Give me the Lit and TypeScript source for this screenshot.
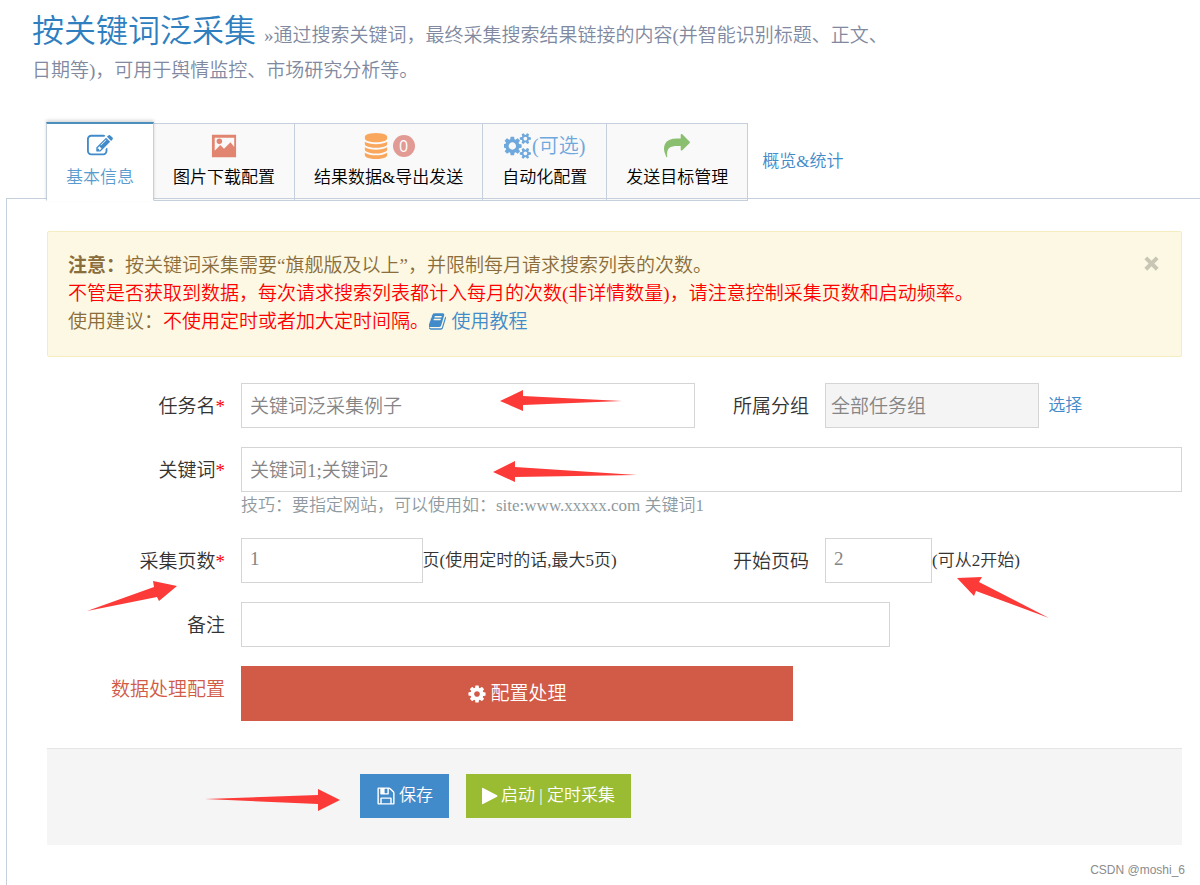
import { LitElement, html, css, svg } from "lit";
import { customElement, property, state } from "lit/decorators.js";
import { classMap } from "lit/directives/class-map.js";

interface Glyph {
  box: string;
  d: string;
}

const SQUARE = "0 0 1792 1792";

const GLYPHS: Record<string, Glyph> = {
  edit: {
    box: SQUARE,
    d: "M888 1184l116-116-152-152-116 116v56h96v96h56zm440-720q-16-16-33 1l-350 350q-17 17-1 33t33-1l350-350q17-17 1-33zm80 594v190q0 119-84.500 203.500t-203.500 84.500h-832q-119 0-203.500-84.500t-84.500-203.500v-832q0-119 84.500-203.500t203.500-84.500h832q63 0 117 25 15 7 18 23 3 17-9 29l-49 49q-14 14-32 8-23-6-45-6h-832q-66 0-113 47t-47 113v832q0 66 47 113t113 47h832q66 0 113-47t47-113v-126q0-13 9-22l64-64q15-15 35-7t20 29zm-96-738l288 288-672 672h-288v-288zm444 132l-92 92-288-288 92-92q28-28 68-28t68 28l152 152q28 28 28 68t-28 68z",
  },
  picture: {
    box: "0 0 28 28",
    d: "M1 2h26v24H1zM4 5v14l6-6 4 4 7-7 4 5V5zM9 6a3 3 0 1 1 0 6 3 3 0 0 1 0-6z",
  },
  database: {
    box: SQUARE,
    d: "M896 768q237 0 443-43t325-127v170q0 69-103 128t-280 93.500-385 34.500-385-34.500-280-93.500-103-128v-170q119 84 325 127t443 43zm0 768q237 0 443-43t325-127v170q0 69-103 128t-280 93.500-385 34.500-385-34.500-280-93.500-103-128v-170q119 84 325 127t443 43zm0-384q237 0 443-43t325-127v170q0 69-103 128t-280 93.500-385 34.500-385-34.500-280-93.500-103-128v-170q119 84 325 127t443 43zm0-1152q208 0 385 34.500t280 93.500 103 128v128q0 69-103 128t-280 93.500-385 34.500-385-34.500-280-93.500-103-128v-128q0-69 103-128t280-93.500 385-34.500z",
  },
  cogs: {
    box: "0 0 1920 1792",
    d: "M832 896q0-106-75-181t-181-75-181 75-75 181 75 181 181 75 181-75 75-181zm768 512q0-52-38-90t-90-38-90 38-38 90q0 53 37.500 90.500t90.500 37.500 90.500-37.500 37.500-90.500zm0-1024q0-52-38-90t-90-38-90 38-38 90q0 53 37.500 90.500t90.500 37.500 90.500-37.500 37.500-90.500zm-384 421v185q0 10-7 19.500t-16 10.500l-155 24q-11 35-32 76 34 48 90 115 7 11 7 20 0 12-7 19-23 30-82.500 89.500t-78.500 59.500q-11 0-21-7l-115-90q-37 19-77 31-11 108-23 155-7 24-30 24h-186q-11 0-20-7.500t-10-17.500l-23-153q-34-10-75-31l-118 89q-7 7-20 7-11 0-21-8-144-133-144-160 0-9 7-19 10-14 41-53t47-61q-23-44-35-82l-152-24q-10-1-17-9.500t-7-19.500v-185q0-10 7-19.500t16-10.500l155-24q11-35 32-76-34-48-90-115-7-11-7-20 0-12 7-20 22-30 82-89t79-59q11 0 21 7l115 90q34-18 77-32 11-108 23-154 7-24 30-24h186q11 0 20 7.500t10 17.500l23 153q34 10 75 31l118-89q8-7 20-7 11 0 21 8 144 133 144 160 0 8-7 19-12 16-42 54t-45 60q23 48 34 82l152 23q10 2 17 10.500t7 19.500zm640 533v140q0 16-149 31-12 27-30 52 51 113 51 138 0 4-4 7-122 71-124 71-8 0-46-47t-52-68q-20 2-30 2t-30-2q-14 21-52 68t-46 47q-2 0-124-71-4-3-4-7 0-25 51-138-18-25-30-52-149-15-149-31v-140q0-16 149-31 13-29 30-52-51-113-51-138 0-4 4-7 4-2 35-20t59-34 30-16q8 0 46 46.500t52 67.500q20-2 30-2t30 2q51-71 92-112l6-2q4 0 124 70 4 3 4 7 0 25-51 138 17 23 30 52 149 15 149 31zm0-1024v140q0 16-149 31-12 27-30 52 51 113 51 138 0 4-4 7-122 71-124 71-8 0-46-47t-52-68q-20 2-30 2t-30-2q-14 21-52 68t-46 47q-2 0-124-71-4-3-4-7 0-25 51-138-18-25-30-52-149-15-149-31v-140q0-16 149-31 13-29 30-52-51-113-51-138 0-4 4-7 4-2 35-20t59-34 30-16q8 0 46 46.500t52 67.500q20-2 30-2t30 2q51-71 92-112l6-2q4 0 124 70 4 3 4 7 0 25-51 138 17 23 30 52 149 15 149 31z",
  },
  share: {
    box: SQUARE,
    d: "M1792 640q0 26-19 45l-512 512q-19 19-45 19t-45-19-19-45v-256h-224q-98 0-175.500 6t-154 21.500-133 42.500-105.500 69.500-80 101-48.500 138.500-17.500 181q0 55 5 123 0 6 2.500 23.500t2.500 26.500q0 15-8.500 25t-23.500 10q-16 0-28-17-7-9-13-22t-13.500-30-10.500-24q-127-285-127-451 0-199 53-333 162-403 875-403h224v-256q0-26 19-45t45-19 45 19l512 512q19 19 19 45z",
  },
  book: {
    box: "64 0 1664 1792",
    d: "M1639 478q40 57 18 129l-275 906q-19 64-76.500 107.500t-122.500 43.500h-923q-77 0-148.500-53.500t-99.500-131.500q-24-67-2-127 0-4 3-27t4-37q1-8-3-21.500t-3-19.500q2-11 8-21t16.500-23.500 16.500-23.500q23-38 45-91.500t30-91.500q3-10 .5-30t-.5-28q3-11 17-28t17-23q21-36 42-92t25-90q1-9-2.500-32t.5-28q4-13 22-30.500t22-22.500q19-26 42.500-84.500t27.500-96.500q1-8-3-25.500t-2-26.500q2-8 9-18t18-23 17-21q8-12 16.500-30.500t15-35 16-36 19.500-32 26.500-23.500 36-11.500 47.500 5.500l-1 3q38-9 51-9h761q74 0 114 56t18 130l-274 906q-36 119-71.500 153.500t-128.500 34.500h-869q-27 0-38 15-11 16-1 43 24 70 144 70h923q29 0 56-15.500t35-41.500l300-987q7-22 5-57 38 15 59 43zm-1064 2q-4 13 2 22.500t20 9.500h608q13 0 25.500-9.500t16.500-22.500l21-64q4-13-2-22.500t-20-9.500h-608q-13 0-25.500 9.500t-16.500 22.500zm-83 256q-4 13 2 22.500t20 9.500h608q13 0 25.500-9.500t16.500-22.500l21-64q4-13-2-22.500t-20-9.500h-608q-13 0-25.500 9.500t-16.500 22.500z",
  },
  cog: {
    box: SQUARE,
    d: "M1152 896q0-106-75-181t-181-75-181 75-75 181 75 181 181 75 181-75 75-181zm512-109v222q0 12-8 23t-20 13l-185 28q-19 54-39 91 35 50 107 138 10 12 10 25t-9 23q-27 37-99 108t-94 71q-12 0-26-9l-138-108q-44 23-91 38-16 136-29 186-7 28-36 28h-222q-14 0-24.500-8.500t-11.500-21.500l-28-184q-49-16-90-37l-141 107q-10 9-25 9-14 0-25-11-126-114-165-168-7-10-7-23 0-12 8-23 15-21 51-66.500t54-70.500q-27-50-41-99l-183-27q-13-2-21-12.500t-8-23.500v-222q0-12 8-23t19-13l186-28q14-46 39-92-40-57-107-138-10-12-10-24 0-10 9-23 26-36 98.500-107.500t94.500-71.500q13 0 26 10l138 107q44-23 91-38 16-136 29-186 7-28 36-28h222q14 0 24.500 8.500t11.500 21.500l28 184q49 16 90 37l142-107q9-9 24-9 13 0 25 10 129 119 165 170 7 8 7 22 0 12-8 23-15 21-51 66.500t-54 70.500q26 50 41 98l183 28q13 2 21 12.500t8 23.500z",
  },
  save: {
    box: SQUARE,
    d: "M512 1536h768v-384h-768v384zm896 0h128v-896q0-14-10-38.500t-20-34.500l-281-281q-10-10-34-20t-39-10v416q0 40-28 68t-68 28h-576q-40 0-68-28t-28-68v-416h-128v1280h128v-416q0-40 28-68t68-28h832q40 0 68 28t28 68v416zm-384-928v-320q0-13-9.500-22.500t-22.500-9.500h-192q-13 0-22.500 9.500t-9.500 22.500v320q0 13 9.500 22.500t22.500 9.500h192q13 0 22.500-9.500t9.500-22.500zm640 32v928q0 40-28 68t-68 28h-1344q-40 0-68-28t-28-68v-1344q0-40 28-68t68-28h928q40 0 88 20t76 48l280 280q28 28 48 76t20 88z",
  },
  play: {
    box: "3 0 16 20",
    d: "M3 2.500q0-1 1-.6L18 9.300q1 .7 0 1.400L4 18.100q-1 .4-1-.6z",
  },
  times: {
    box: "0 0 20 20",
    d: "M5.500 2.500L10 7l4.500-4.500 3 3L13 10l4.500 4.500-3 3L10 13l-4.500 4.500-3-3L7 10 2.500 5.500z",
  },
};

@customElement("ui-icon")
class UiIcon extends LitElement {
  @property() name = "cog";

  static styles = css`
    :host {
      display: inline-flex;
    }
    .glyph {
      height: 100%;
      fill: currentColor;
      fill-rule: evenodd;
    }
  `;

  render() {
    const g = GLYPHS[this.name];
    return html`<svg class="glyph" viewBox=${g.box} aria-hidden="true">
      ${svg`<path d=${g.d}></path>`}
    </svg>`;
  }
}

const TABS = [
  { id: "basic", label: "基本信息", icon: "edit" },
  { id: "picture", label: "图片下载配置", icon: "picture" },
  { id: "database", label: "结果数据&导出发送", icon: "database", count: "0" },
  { id: "cogs", label: "自动化配置", icon: "cogs", note: "(可选)" },
  { id: "share", label: "发送目标管理", icon: "share" },
];

const ARROWS = [
  "500,401 523,390 523,396 622,401 523,405 523,411",
  "493,472 515,461 515,467 637,475 515,477 515,482",
  "177,586 153,581 154,587 87,611 157,597 159,601",
  "957,578 982,577 979,582 1049,618 976,591 974,596",
  "340,800 318,789 318,795 205,799 318,804 318,811",
];

@customElement("app-root")
class AppRoot extends LitElement {
  @state() private active = "basic";
  @state() private noticeOpen = true;

  static styles = css`
    :host {
      display: block;
      position: relative;
      box-sizing: border-box;
      min-height: 100vh;
      background: #fff;
      color: #333;
      font: 350 19px/28px "Liberation Serif", "Noto Sans CJK SC", serif;
    }
    * {
      box-sizing: border-box;
    }
    a {
      color: #428bca;
      text-decoration: none;
    }
    button,
    input {
      font: inherit;
    }
    .page {
      display: flex;
      flex-direction: column;
      min-height: 100vh;
    }
    .heading {
      max-width: 892px;
      margin: 0;
      padding: 14px 0 38px 32px;
      color: #2f7fc0;
      font-size: 32px;
      font-weight: 350;
      line-height: 35px;
    }
    .subtitle {
      color: #8089a0;
      font-size: 19px;
      line-height: 24px;
    }
    .tabs {
      display: flex;
      align-items: flex-end;
      margin-bottom: -3px;
      padding-left: 46px;
    }
    .tab {
      display: flex;
      flex-direction: column;
      align-items: center;
      gap: 6px;
      margin: 0 0 0 -1px;
      padding: 8px 19px 10px;
      border: 1px solid #c5d0dc;
      border-radius: 0;
      background: #f9f9f9;
      color: #000;
      font-size: 17px;
      line-height: 24px;
      cursor: pointer;
    }
    .tab.active {
      position: relative;
      z-index: 1;
      margin-left: 0;
      border-top: 2px solid #4c8fbd;
      border-bottom-color: #fff;
      background: #fff;
      box-shadow: 0 -2px 3px rgba(0, 0, 0, 0.15);
      color: #5a9bcf;
    }
    .tab-icon {
      display: flex;
      align-items: center;
      height: 28px;
      font-size: 20px;
    }
    .tab-icon ui-icon {
      height: 26px;
    }
    .basic {
      color: #428bca;
    }
    .picture {
      color: #e28570;
    }
    .database {
      gap: 4px;
      color: #f8a75c;
    }
    .cogs {
      color: #6fa8dc;
    }
    .share {
      color: #8abf70;
    }
    .count {
      width: 22px;
      height: 22px;
      border-radius: 11px;
      background: #e29a94;
      color: #fff;
      font: 16px/22px "Open Sans", sans-serif;
      text-align: center;
    }
    .overview {
      align-self: center;
      padding-left: 14px;
      font-size: 17px;
    }
    .pane {
      flex: 1;
      margin-left: 6px;
      padding: 32px 18px 40px 40px;
      border-top: 1px solid #c5d0dc;
      border-left: 1px solid #c5d0dc;
    }
    .notice {
      display: flex;
      justify-content: space-between;
      align-items: flex-start;
      margin-bottom: 26px;
      padding: 20px;
      border: 1px solid #f5edc0;
      border-radius: 2px;
      background: #fcf8e3;
      color: #8a6d3b;
    }
    .notice p {
      margin: 0;
    }
    .notice strong {
      font-weight: 700;
    }
    .danger {
      color: #f00;
    }
    .manual ui-icon {
      height: 19px;
      vertical-align: -3px;
    }
    .close {
      display: flex;
      padding: 2px 0;
      border: 0;
      background: none;
      color: #cac6b6;
      cursor: pointer;
    }
    .close ui-icon {
      height: 19px;
    }
    .form {
      display: flex;
      flex-direction: column;
      gap: 19px;
    }
    .row {
      display: grid;
      grid-template-columns: 178px 454fr 98px 357fr;
      column-gap: 16px;
    }
    .label {
      padding-top: 10px;
      text-align: right;
      white-space: nowrap;
    }
    .label.strong {
      color: #d15b47;
    }
    .field {
      display: flex;
      align-items: center;
      font-size: 17px;
      white-space: nowrap;
    }
    .wide {
      grid-column: 2 / -1;
    }
    .text {
      width: 100%;
      height: 45px;
      padding: 0 8px 3px;
      border: 1px solid #d5d5d5;
      border-radius: 0;
      outline: 0;
      background: #fff;
      color: #858585;
      font-size: 19px;
    }
    .text:focus {
      border-color: #f59942;
    }
    .pages {
      width: 40%;
    }
    .start {
      width: 30%;
    }
    .group {
      width: 60%;
      margin-right: 9px;
      padding: 0 5px 3px;
      background: #f4f4f4;
    }
    .remark {
      width: 69%;
    }
    .hint {
      margin: 0;
      color: #8f9a9f;
      font-size: 17px;
      line-height: 27px;
    }
    .button {
      display: flex;
      align-items: center;
      justify-content: center;
      gap: 3px;
      height: 44px;
      padding: 0 16px;
      border: 0;
      background: #428bca;
      color: #fff;
      font-size: 17px;
      cursor: pointer;
    }
    .button ui-icon {
      height: 20px;
    }
    .process {
      width: 552px;
      max-width: 100%;
      height: 55px;
      background: #d15b47;
      font-size: 19px;
    }
    .run {
      background: #9abc32;
    }
    .actions {
      display: flex;
      flex-wrap: wrap;
      gap: 17px;
      margin-top: 27px;
      padding: 25px 16px 27px 313px;
      border-top: 1px solid #e5e5e5;
      background: #f5f5f5;
    }
    .arrows {
      position: absolute;
      top: 0;
      left: 0;
      fill: #fc3a37;
      pointer-events: none;
    }
    .watermark {
      position: absolute;
      right: 15px;
      bottom: 6px;
      color: #8c8c8c;
      font: 12px/18px "Liberation Sans", sans-serif;
    }
  `;

  private renderTab(tab: (typeof TABS)[number]) {
    const on = this.active === tab.id;
    return html`<button
      class=${classMap({ tab: true, active: on })}
      role="tab"
      aria-selected=${on ? "true" : "false"}
      @click=${() => (this.active = tab.id)}
    >
      <span class="tab-icon ${tab.id}"
        ><ui-icon name=${tab.icon}></ui-icon>${tab.count
          ? html`<span class="count">${tab.count}</span>`
          : ""}${tab.note ?? ""}</span
      >
      <span>${tab.label}</span>
    </button>`;
  }

  private renderNotice() {
    return html`<div class="notice">
      <div>
        <p><strong>注意：</strong>按关键词采集需要“旗舰版及以上”，并限制每月请求搜索列表的次数。</p>
        <p class="danger">不管是否获取到数据，每次请求搜索列表都计入每月的次数(非详情数量)，请注意控制采集页数和启动频率。</p>
        <p>
          使用建议：<span class="danger">不使用定时或者加大定时间隔。</span
          ><a class="manual" href="#manual"><ui-icon name="book"></ui-icon> 使用教程</a>
        </p>
      </div>
      <button class="close" aria-label="关闭" @click=${() => (this.noticeOpen = false)}>
        <ui-icon name="times"></ui-icon>
      </button>
    </div>`;
  }

  render() {
    const star = html`<span class="danger">*</span>`;
    return html`
      <div class="page">
        <h1 class="heading">
          按关键词泛采集
          <span class="subtitle"
            >»通过搜索关键词，最终采集搜索结果链接的内容(并智能识别标题、正文、日期等)，可用于舆情监控、市场研究分析等。</span
          >
        </h1>
        <div class="tabs" role="tablist">
          ${TABS.map((t) => this.renderTab(t))}
          <a class="overview" href="#overview">概览&amp;统计</a>
        </div>
        <main class="pane">
          ${this.noticeOpen ? this.renderNotice() : ""}
          <form class="form" @submit=${(e: Event) => e.preventDefault()}>
            <div class="row">
              <label class="label" for="task">任务名${star}</label>
              <div class="field"><input class="text" id="task" value="关键词泛采集例子" /></div>
              <label class="label" for="group">所属分组</label>
              <div class="field">
                <input class="text group" id="group" value="全部任务组" readonly />
                <a href="#choose">选择</a>
              </div>
            </div>
            <div class="row">
              <label class="label" for="words">关键词${star}</label>
              <div class="wide">
                <div class="field"><input class="text" id="words" value="关键词1;关键词2" /></div>
                <p class="hint">技巧：要指定网站，可以使用如：site:www.xxxxx.com 关键词1</p>
              </div>
            </div>
            <div class="row">
              <label class="label" for="pages">采集页数${star}</label>
              <div class="field">
                <input class="text pages" id="pages" value="1" />页(使用定时的话,最大5页)
              </div>
              <label class="label" for="start">开始页码</label>
              <div class="field"><input class="text start" id="start" value="2" />(可从2开始)</div>
            </div>
            <div class="row">
              <label class="label" for="remark">备注</label>
              <div class="wide field"><input class="text remark" id="remark" /></div>
            </div>
            <div class="row">
              <label class="label strong" for="process">数据处理配置</label>
              <div class="wide">
                <button class="button process" id="process" type="button">
                  <ui-icon name="cog"></ui-icon>配置处理
                </button>
              </div>
            </div>
          </form>
          <div class="actions">
            <button class="button"><ui-icon name="save"></ui-icon>保存</button>
            <button class="button run"><ui-icon name="play"></ui-icon>启动 | 定时采集</button>
          </div>
        </main>
      </div>
      <svg class="arrows" width="1200" height="885" aria-hidden="true">
        ${ARROWS.map((p) => svg`<polygon points=${p}></polygon>`)}
      </svg>
      <div class="watermark">CSDN @moshi_6</div>
    `;
  }
}
